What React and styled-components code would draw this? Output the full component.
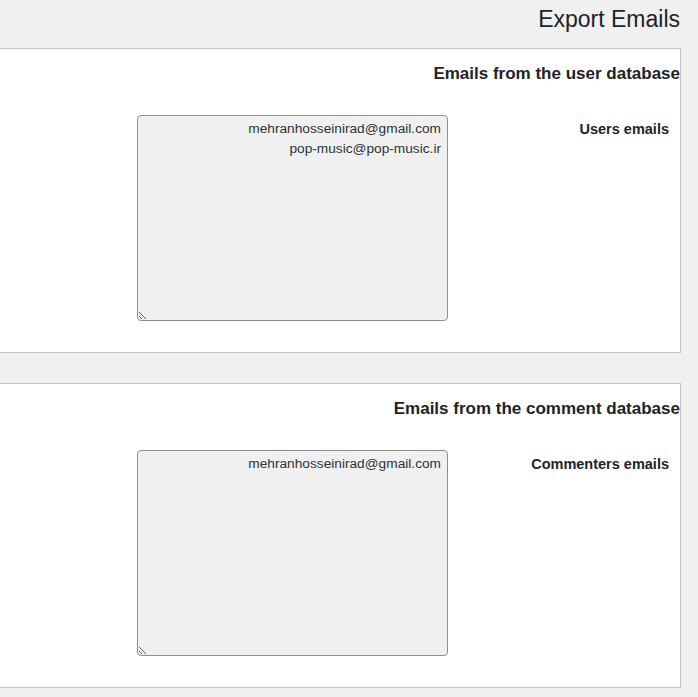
import React from 'react';
import styled, { createGlobalStyle } from 'styled-components';

const GlobalStyle = createGlobalStyle`
	html, body {
		margin: 0;
		padding: 0;
		background: #f0f0f1;
		overflow: hidden;
	}
	body {
		font-family: "Liberation Sans", Arial, sans-serif;
		color: #1d2327;
	}
`;

const Wrap = styled.div`
	direction: rtl;
	padding: 0 17px 0 0;
	margin-left: -40px;
`;

const PageTitle = styled.h1`
	margin: 0;
	padding: 5px 1px 0 0;
	height: 43px;
	font-size: 23px;
	font-weight: 400;
	line-height: 29px;
	color: #1d2327;
`;

const Card = styled.section`
	background: #fff;
	border: 1px solid #c3c4c7;
	height: 303px;
	margin-bottom: 30px;
	box-sizing: content-box;
`;

const CardTitle = styled.h2`
	margin: 0;
	padding: 14px 0 0;
	font-size: 17px;
	font-weight: 700;
	line-height: 22px;
	color: #1d2327;
`;

const Row = styled.div`
	display: flex;
	align-items: flex-start;
	margin-top: 30px;
`;

const Label = styled.label`
	width: 200px;
	padding: 6px 11px 0 12px;
	font-size: 14.5px;
	font-weight: 700;
	color: #1d2327;
	text-align: right;
`;

const Field = styled.div`
	padding: 0 9px;
`;

const EmailBox = styled.textarea`
	display: block;
	width: 311px;
	height: 206px;
	box-sizing: border-box;
	background: #f0f0f1;
	border: 1px solid #8c8f94;
	border-radius: 4px;
	padding: 3px 6px;
	font-family: "Liberation Sans", Arial, sans-serif;
	font-size: 13.7px;
	line-height: 20px;
	color: #2c3338;
	text-align: right;
	direction: rtl;
	resize: both;
	outline: none;
`;

const sections = [
	{
		title: 'Emails from the user database',
		label: 'Users emails',
		emails: ['mehranhosseinirad@gmail.com', 'pop-music@pop-music.ir'],
	},
	{
		title: 'Emails from the comment database',
		label: 'Commenters emails',
		emails: ['mehranhosseinirad@gmail.com'],
	},
];

function App() {
	return (
		<Wrap>
			<GlobalStyle />
			<PageTitle>Export Emails</PageTitle>

			{sections.map((section, index) => (
				<Card key={`section-${index}`}>
					<CardTitle>{section.title}</CardTitle>
					<Row>
						<Label>{section.label}</Label>
						<Field>
							<EmailBox readOnly value={section.emails.join('\n')} />
						</Field>
					</Row>
				</Card>
			))}
		</Wrap>
	);
}

export default App;
